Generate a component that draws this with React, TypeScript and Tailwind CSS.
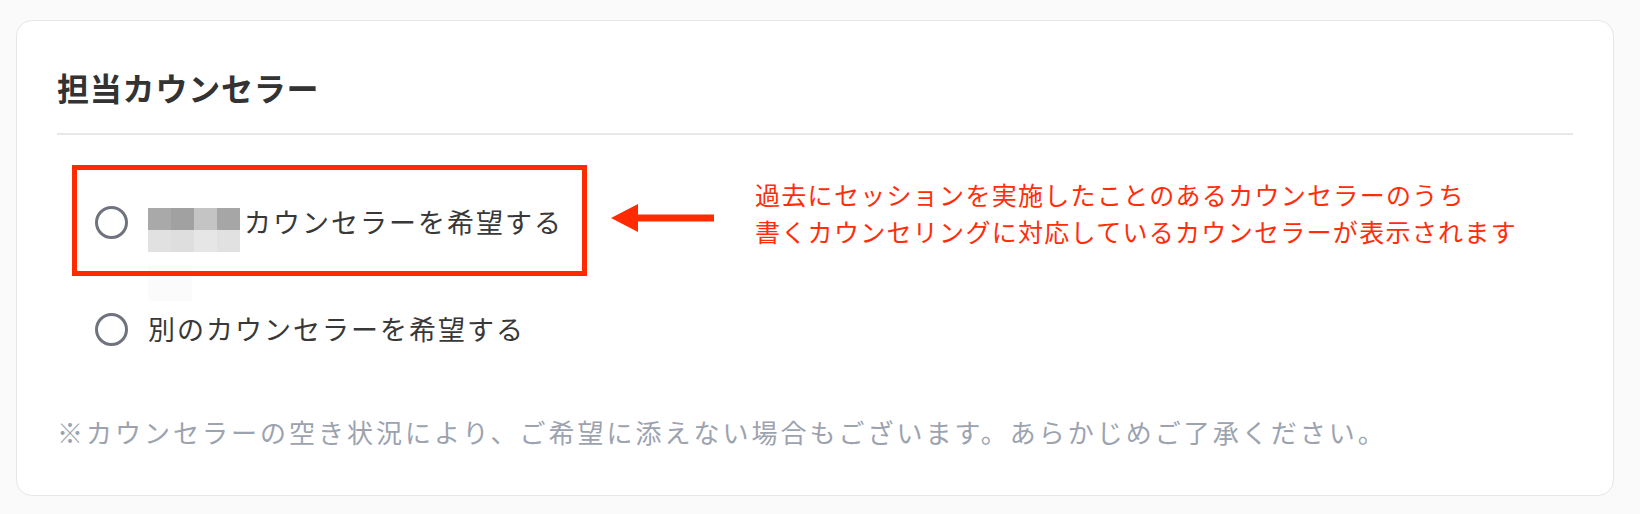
import React from "react";

const blurTop = ["bg-[#a9a9a9]", "bg-[#a1a1a1]", "bg-[#c4c4c4]", "bg-[#a6a6a6]"];
const blurBottom = ["bg-[#e1e1e1]", "bg-[#dedede]", "bg-[#e6e6e6]", "bg-[#e1e1e1]"];

function Radio() {
  return <span className="block h-[33px] w-[33px] shrink-0 rounded-full border-[3px] border-[#6e737d]" />;
}

function BlurredName() {
  return (
    <div className="mt-4 mr-1 grid w-[92px] shrink-0 grid-cols-4">
      {blurTop.map((c, i) => (
        <span key={"t" + i} className={"h-[22px] " + c} />
      ))}
      {blurBottom.map((c, i) => (
        <span key={"b" + i} className={"h-[22px] " + c} />
      ))}
    </div>
  );
}

export default function App() {
  return (
    <div className="min-h-screen bg-[#fafafa] pt-5 pl-4 pr-[26px] pb-[18px] font-['Noto_Sans_CJK_JP',sans-serif]">
      <div className="relative rounded-2xl border border-[#e6e6e8] bg-white px-10 pt-[46px] pb-[43px]">
        <div className="border-b-2 border-[#e8e8e8] pb-[26px]">
          <h2 className="h-10 text-[32px] leading-10 font-bold tracking-[0.8px] text-[#333333]">
            担当カウンセラー
          </h2>
        </div>

        <div className="mt-[67px] flex flex-col gap-[67px] pl-[38px] text-[27px] tracking-[2px] text-[#383838]">
          <label className="flex h-10 items-center">
            <Radio />
            <span className="ml-5 flex items-center">
              <BlurredName />
              <span className="leading-10">カウンセラーを希望する</span>
            </span>
          </label>
          <label className="flex h-10 items-center">
            <Radio />
            <span className="ml-5 leading-10">別のカウンセラーを希望する</span>
          </label>
        </div>

        <p className="mt-[63px] h-10 text-[26px] leading-10 tracking-[3px] text-[#9ca3af]">
          ※カウンセラーの空き状況により、ご希望に添えない場合もございます。あらかじめご了承ください。
        </p>

        {/* faint pixel leftovers of the blurred name */}
        <div className="absolute left-[131px] top-[244px] h-[36px] w-[44px] bg-[#fbfbfb]" />

        {/* annotation */}
        <div className="absolute left-[55px] top-[144px] h-[111px] w-[515px] border-[5px] border-[#ff2a00]" />
        <svg
          className="absolute left-[594px] top-[183px]"
          width="103"
          height="28"
          viewBox="0 0 103 28"
        >
          <polygon points="0,14 27,0 27,28" fill="#ff2a00" />
          <rect x="26" y="10.5" width="77" height="7" fill="#ff2a00" />
        </svg>
        <div className="absolute left-[738px] top-[155px] text-[25px] leading-[36.5px] tracking-[1.3px] text-[#ff2d0a]">
          <div>過去にセッションを実施したことのあるカウンセラーのうち</div>
          <div>書くカウンセリングに対応しているカウンセラーが表示されます</div>
        </div>
      </div>
    </div>
  );
}
